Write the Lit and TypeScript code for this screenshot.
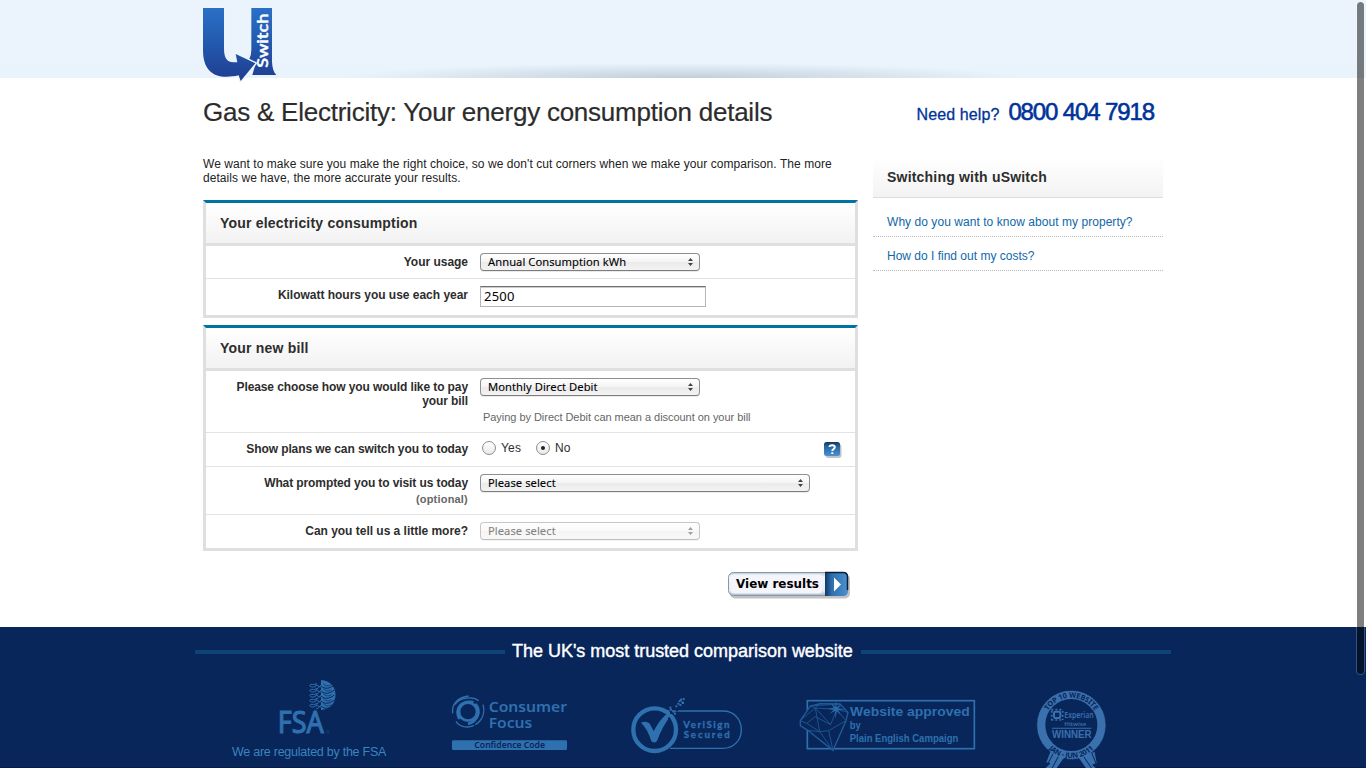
import { LitElement, html, css, svg } from "lit";
import { customElement, property } from "lit/decorators.js";

/** Aqua-style pop-up button. */
@customElement("popup-select")
class PopupSelect extends LitElement {
  @property() label = "";
  static styles = css`
    :host { display: block; width: 220px; }
    :host([wide]) { width: 330px; }
    :host([off]) .box { opacity: .5; }
    .box {
      box-sizing: border-box; height: 18px; padding: 0 5px 0 7px;
      border: 1px solid #8f8f8f; border-bottom-color: #7d7d7d; border-radius: 4px;
      background: linear-gradient(#fff, #f5f5f5 48%, #ebebeb 52%, #f3f3f3);
      display: flex; align-items: center; justify-content: space-between;
      font: 11.2px/16px "Noto Sans", sans-serif; color: #000; white-space: nowrap;
      letter-spacing: .05px; -webkit-text-stroke: .1px;
      box-shadow: 0 1px 0 rgba(0,0,0,.08);
    }
    svg { display: block; }
  `;
  render() {
    return html`<div class="box"><span>${this.label}</span>
      <svg width="7" height="10" viewBox="0 0 7 10"><path fill="#444" d="M3.5 1 6 4H1ZM1 6H6L3.5 9Z"/></svg></div>`;
  }
}

const logo = svg`
  <defs><linearGradient id="g" x1="0" y1="24" x2="0" y2="235" gradientUnits="userSpaceOnUse">
    <stop offset="0" stop-color="#2a70c6"/><stop offset=".55" stop-color="#2257ac"/><stop offset="1" stop-color="#1f3f92"/>
  </linearGradient></defs>
  <path fill="url(#g)" d="M184 24H246V185Q247 212 259 225H187Q192 206 197 192L178 176Q184 165 184 150Z"/>
  <path fill="url(#g)" stroke="#edf4fc" stroke-width="9" stroke-linejoin="round" paint-order="stroke" d="M39 24H102V145C102 176 112 187 130 187H142L137 162L196 190L152 243L146 226C82 240 39 222 39 150Z"/>
  <text class="t" fill="#fff" stroke="#fff" stroke-width="1.2" font-weight="600" font-size="47" transform="translate(233 203) rotate(-90)" textLength="162" lengthAdjust="spacingAndGlyphs">Switch</text>`;

const waves = [0, 1, 2, 3, 4].map((i) => {
  const y = 198 + i * 15;
  return svg`<path fill="none" stroke="#2f70ae" stroke-width="3" d="M396 ${y + 3}C384 ${y + 3} 374 ${y - 8} 363 ${y - 5}C354 ${y - 1} 364 ${y + 6} 374 ${y + 2}C382 ${y - 1} 382 ${y - 8} 376 ${y - 9}M396 ${y - 5}C390 ${y - 3} 388 ${y + 8} 378 ${y + 9}"/>
    <path fill="none" stroke="#08265a" stroke-width="3" d="M393 ${y}C404 ${y + 10} 418 ${y + 9} 433 ${y - 3}"/>
    <path fill="none" stroke="#08265a" stroke-width="2" d="M400 ${y - 7}C406 ${y} 416 ${y + 2} 424 ${y - 4}"/>`;
});

const fsa = svg`
  <path fill="#2f70ae" d="M393 180c58 2 58 88 0 90Z"/>${waves}
  <text class="hum" fill="#2f70ae" font-weight="400" stroke="#2f70ae" stroke-width="3.5" font-size="94" x="263" y="340" textLength="138" lengthAdjust="spacingAndGlyphs">FSA</text>
  <circle cx="413" cy="335" r="4" fill="none" stroke="#2a66a2"/>
  <text class="ari" fill="#3a84bf" font-size="37.5" x="126" y="407" textLength="463">We are regulated by the FSA</text>`;

const consumer = svg`
  <g fill="none" stroke="#2f70ae">
    <circle cx="834" cy="275" r="27" stroke-width="8"/>
    <path stroke-width="9" d="M809 297C793 266 814 240 850 247"/>
    <path stroke-width="8" d="M856 252C876 274 862 304 834 312"/>
    <path stroke-width="4" d="M788 280C785 252 802 232 836 228M794 254C810 232 850 228 866 242M798 304C808 320 832 326 852 316M856 314C876 302 886 280 879 254"/>
  </g>
  <g class="hum" fill="#2f70ae" font-weight="600" font-size="43">
    <text x="896" y="276" textLength="235" lengthAdjust="spacingAndGlyphs">Consumer</text>
    <text x="896" y="323" textLength="131" lengthAdjust="spacingAndGlyphs">Focus</text></g>
  <rect x="786" y="361" width="345" height="29" rx="4" fill="#2f70ae"/>
  <text class="hum" fill="#08265a" font-weight="600" font-size="24" x="853" y="385" textLength="212" lengthAdjust="spacingAndGlyphs">Confidence Code</text>`;

const dots = [[240,266],[250,262],[248,272],[256,256],[262,248],[258,268],[268,252],[266,240],[274,244],[240,276],[232,270],[252,278],[244,286],[234,292],[246,298],[270,236],[278,234],[264,258],[276,246],[238,260],[224,290]];
const verisign = svg`
  <path fill="none" stroke="#2f70ae" stroke-width="4" d="M246 273H398C434 273 454 300 454 329S434 385 398 385H240"/>
  <circle cx="194" cy="329" r="64" fill="#08265a" stroke="#2f70ae" stroke-width="13"/>
  <path fill="#2f70ae" d="M153 308c13-5 22-2 28 6l10 20c12-25 26-42 47-59l6 10c-18 22-32 48-43 78c-6 6-12 6-17 0c-7-23-17-41-31-55Z"/>
  ${dots.map(([x, y], i) => svg`<rect x=${x} y=${y} width="6" height="6" fill=${i % 4 === 1 ? "#08265a" : "#2f70ae"} />`)}
  <g class="geo" fill="#2f70ae" stroke="#2f70ae" stroke-width="1" font-weight="700" font-size="29">
    <text x="280" y="323" textLength="138">VeriSign</text><text x="281" y="354" textLength="138">Secured</text></g>`;

const plain = svg`
  <rect x="652" y="242" width="501" height="144" fill="none" stroke="#2f70ae" stroke-width="5"/>
  <path fill="#08265a" stroke="#225b98" stroke-width="4" d="M631 302L661 258L690 251L750 252L774 277L768 302L729 391L653 331L631 317Z"/>
  <path fill="none" stroke="#225b98" stroke-width="2.5" d="M631 302L650 310L689 335L716 332L768 302M653 331L689 335L729 391L716 332M661 258L676 264L740 268L774 277M690 251L676 264L632 300M676 264L689 335M676 264L722 314L740 268L768 302M650 310L676 290L722 314M750 252L740 268M661 258L750 252"/>
  <path fill="#2a68a6" d="M738 236l2 25 16-7-12 11 24 3-24 3 8 14-12-11-3 24-2-25-16 8 12-12-20-3 20-3-9-14 14 11Z"/>
  <g class="ari" fill="#2f70ae">
    <text font-weight="700" font-size="38" x="780" y="289" textLength="359" lengthAdjust="spacingAndGlyphs">Website approved</text>
    <text font-weight="700" font-size="32" x="779" y="328" textLength="33" lengthAdjust="spacingAndGlyphs">by</text>
    <text font-weight="700" font-size="34" x="779" y="365" textLength="326" lengthAdjust="spacingAndGlyphs">Plain English Campaign</text></g>`;

const experian = svg`
  <path fill="#3a70ad" d="M211 396L254 410L226 450H190L212 430L199 427ZM344 396L294 410L322 450H354L336 434L350 429Z"/>
  <path fill="none" stroke="#08265a" stroke-width="3" d="M221 398L199 440M335 398L352 440M236 408L213 450M310 408L338 450"/>
  <circle cx="274" cy="315" r="90" fill="#08265a" stroke="#3a70ad" stroke-width="24"/>
  <circle cx="274" cy="315" r="102" fill="none" stroke="#4b82bd" stroke-width="2" stroke-dasharray="4 3"/>
  <path id="top" fill="none" d="M192 315A82 82 0 0 1 356 315"/>
  <path id="bot" fill="none" d="M175 315A99 99 0 0 0 373 315"/>
  <g class="hum" font-weight="700" font-size="22" fill="#08265a" text-anchor="middle">
    <text><textPath href="#top" startOffset="50%" textLength="168">TOP 10 WEBSITE</textPath></text>
    <text><textPath href="#bot" startOffset="50%" textLength="150">JAN - JUN 2011</textPath></text></g>
  <rect x="222" y="275" width="19" height="19" rx="4" fill="none" stroke="#3a70ad" stroke-width="6"/>
  <path stroke="#3a70ad" stroke-width="5" stroke-dasharray="6 6" d="M214 269H250M214 300H250M215 272V300M248 272V300"/>
  <g class="hum" fill="#3a70ad">
    <text font-size="24" font-weight="600" x="253" y="294" textLength="88" lengthAdjust="spacingAndGlyphs">Experian</text>
    <text font-size="18" font-weight="600" x="253" y="317" textLength="66" lengthAdjust="spacingAndGlyphs">Hitwise</text>
    <path d="M216 323H334V326H216Z"/>
    <text class="ari" font-size="34" font-weight="700" x="216" y="354" textLength="119" lengthAdjust="spacingAndGlyphs">WINNER</text></g>`;

@customElement("app-root")
class AppRoot extends LitElement {
  static styles = css`
    :host { display: block; height: 768px; overflow: hidden; position: relative; background: #fff;
      font: 12px/14px "Liberation Sans", Arial, sans-serif; color: #2d2d2d; }
    * { box-sizing: border-box; }
    h1, h2, p { margin: 0; }
    svg { display: block; }
    .top { height: 78px; padding-left: 190px;
      background: radial-gradient(ellipse 340px 15px at 683px 78px, rgba(150,165,180,.48), rgba(170,188,202,.32) 50%, rgba(225,243,247,0)) no-repeat, linear-gradient(#ebf4fd 0 55px, #e9f3fa); }
    .logo { overflow: visible; }
    .logo .t { font-family: Lato, sans-serif; }
    .main { height: 549px; padding-left: 203px; display: flex; gap: 15px; }
    .left { width: 655px; padding-top: 18px; }
    h1 { font-size: 26px; line-height: 32px; font-weight: 400; letter-spacing: -.235px; white-space: nowrap; color: #2c2c2c; -webkit-text-stroke: .2px; }
    .intro { margin-top: 29px; margin-bottom: 15px; white-space: nowrap; color: #222; letter-spacing: .06px; }
    .panel { border: 3px solid #dfdfdf; border-top-color: #0073a4; margin-bottom: 7px; }
    .head { height: 43px; border-bottom: 3px solid #dfdfdf; padding: 12px 14px; line-height: 16px;
      font-size: 14px; font-weight: 700; letter-spacing: .2px; background: linear-gradient(#fff, #f2f2f2); }
    .row { display: flex; gap: 12px; border-bottom: 1px solid #e3e3e3; height: 33px; }
    .row.last { border: 0; }
    .label { width: 262px; text-align: right; font-weight: 700; padding-top: 9px; letter-spacing: -.1px; }
    .even { letter-spacing: -.02px; }
    .opt { display: block; font-size: 11px; color: #666; margin-top: 2px; letter-spacing: .2px; }
    .field { flex: 1; padding-top: 7px; }
    .h36 { height: 36px; } .h62 { height: 62px; } .h34 { height: 34px; } .h48 { height: 48px; }
    .input { width: 226px; height: 21px; border: 1px solid #b5b5b5; border-top: 1px solid #6e6e6e; box-shadow: inset 0 1px 0 #ccc;
      font: 13px/19px "Noto Sans", sans-serif; color: #000; padding-left: 3px; letter-spacing: .2px; }
    .hint { font-size: 11px; color: #666; margin: 14px 0 0 3px; letter-spacing: -.04px; }
    .radios { display: flex; align-items: center; padding: 0 14px 4px 2px; }
    .radio { width: 14px; height: 14px; border: 1px solid #8c8c8c; border-radius: 50%; background: linear-gradient(#fff, #e9e9e9); margin-right: 5px; display: grid; place-items: center; }
    .dot { width: 4px; height: 4px; border-radius: 50%; background: #222; }
    .rl { width: 35px; }
    .radios span { letter-spacing: .2px; }
    .help { margin: 5px -1px 0 auto; }
    .act { display: flex; justify-content: flex-end; padding: 13px 5px 0 0; }
    .side { width: 290px; padding-top: 19px; color: #039; }
    .call { display: flex; align-items: baseline; justify-content: flex-end; gap: 9px; height: 60px; padding-right: 9px; font-size: 16px; line-height: 30px; white-space: nowrap; color: #039; }
    .phone { font-size: 24px; letter-spacing: -1.12px; -webkit-text-stroke: .6px #039; }
    .call > span:first-child { -webkit-text-stroke: .3px #039; letter-spacing: .1px; }
    .sh { height: 41px; border-bottom: 1px solid #ddd; padding: 12px 14px; font-size: 14px; line-height: 16px; font-weight: 700; color: #2d2d2d; letter-spacing: .2px; background: linear-gradient(#fff, #f3f3f3); }
    .link { height: 34px; padding: 12px 14px 0; color: #0f68ab; border-bottom: 1px dotted #bbb; }
    .link.first { height: 39px; padding-top: 17px; letter-spacing: .05px; }
    .foot { height: 141px; background: #08265a; padding-left: 195px; box-shadow: inset 0 -1px #061d4b; }
    .title { width: 976px; height: 49px; display: flex; align-items: center; gap: 7px; color: #fff; font-size: 18px; white-space: nowrap; letter-spacing: -.02px; }
    .title h2 { font-size: 18px; font-weight: 400; -webkit-text-stroke: .4px #fff; line-height: 22px; padding-bottom: 1px; width: 342px; }
    .line { flex: 1; height: 4px; background: #0d4377; margin-top: 1px; }
    .badges { display: flex; gap: 40px; padding-left: 25px; }
    .badges svg { flex: none; }
    .hum { font-family: "Noto Sans", sans-serif; } .ari { font-family: "Liberation Sans", Arial, sans-serif; } .geo { font-family: Lato, sans-serif; }
    .scroll { position: absolute; right: 1px; top: 1px; width: 9px; height: 674px; border: 1px solid rgba(255,255,255,.2); border-radius: 5px; background: rgba(0,0,0,.5); background-clip: padding-box; }
  `;

  render() {
    return html`
      <div class="top"><svg class="logo" width="110" height="90" viewBox="0 0 330 270">${logo}</svg></div>
      <div class="main">
        <div class="left">
          <h1>Gas &amp; Electricity: Your energy consumption details</h1>
          <p class="intro">We want to make sure you make the right choice, so we don't cut corners when we make your comparison. The more<br>details we have, the more accurate your results.</p>
          <div class="panel">
            <div class="head">Your electricity consumption</div>
            <div class="row"><div class="label even">Your usage</div><div class="field"><popup-select label="Annual Consumption kWh"></popup-select></div></div>
            <div class="row h36 last"><div class="label even">Kilowatt hours you use each year</div><div class="field"><div class="input">2500</div></div></div>
          </div>
          <div class="panel">
            <div class="head">Your new bill</div>
            <div class="row h62"><div class="label">Please choose how you would like to pay<br>your bill</div>
              <div class="field"><popup-select label="Monthly Direct Debit"></popup-select><div class="hint">Paying by Direct Debit can mean a discount on your bill</div></div></div>
            <div class="row h34"><div class="label">Show plans we can switch you to today</div>
              <div class="field radios"><span class="radio"></span><span class="rl">Yes</span><span class="radio"><span class="dot"></span></span><span>No</span>
                <svg class="help" width="18" height="17" viewBox="0 0 18 17">
                  <defs><linearGradient id="h" x2="0" y2="1"><stop stop-color="#12365d"/><stop offset=".35" stop-color="#2867a5"/><stop offset="1" stop-color="#4a92d2"/></linearGradient></defs>
                  <rect x="1.5" y="2" width="16" height="14" rx="3" fill="#999" opacity=".6"/><rect width="16" height="14" rx="2.5" fill="url(#h)"/>
                  <path d="M5.5 5C5.5 2.8 10.8 2.6 10.8 5.3C10.8 7 8.3 7 8.3 9M8.3 10.2V12" fill="none" stroke="#fff" stroke-width="2"/></svg></div></div>
            <div class="row h48"><div class="label">What prompted you to visit us today<span class="opt">(optional)</span></div><div class="field"><popup-select wide label="Please select"></popup-select></div></div>
            <div class="row last"><div class="label even">Can you tell us a little more?</div><div class="field"><popup-select off label="Please select"></popup-select></div></div>
          </div>
          <div class="act"><svg width="126" height="30" viewBox="0 0 126 30">
            <defs><linearGradient id="b" x2="1" y2="0"><stop stop-color="#0d3868"/><stop offset=".3" stop-color="#2f70ae"/><stop offset="1" stop-color="#4c90cf"/></linearGradient>
              <linearGradient id="w" x2="0" y2="1"><stop stop-color="#c3cbd5"/><stop offset=".2" stop-color="#f6f7fb"/><stop offset=".8" stop-color="#e8ecf4"/><stop offset="1" stop-color="#aab7c4"/></linearGradient></defs>
            <rect x="3" y="3" width="120" height="24.500" rx="5" fill="#999" opacity=".6"/>
            <rect x="1.5" y="1.5" width="119" height="23" rx="5" fill="url(#w)" stroke="#8298ab"/>
            <rect x="4" y="3.5" width="91" height="19" rx="3" fill="#f4f5fb"/>
            <path d="M98 1H116Q121 1 121 6V20Q121 25 116 25H98Z" fill="url(#b)"/>
            <path d="M98 1.5H116Q120.5 1.5 120.5 6V19" fill="none" stroke="#081f3b" stroke-width="1.5"/>
            <path d="M107 6.500L114 13.500L107 20.500Z" fill="#fff"/>
            <text x="9" y="17" font-family="DejaVu Sans" font-weight="700" font-size="12.500" fill="#000" textLength="83" lengthAdjust="spacingAndGlyphs">View results</text></svg></div>
        </div>
        <div class="side">
          <div class="call"><span>Need help?</span><span class="phone">0800 404 7918</span></div>
          <div class="sh">Switching with uSwitch</div>
          <div class="link first">Why do you want to know about my property?</div>
          <div class="link">How do I find out my costs?</div>
        </div>
      </div>
      <div class="foot">
        <div class="title"><span class="line"></span><h2>The UK's most trusted comparison website</h2><span class="line"></span></div>
        <div class="badges">
          <svg width="180" height="92" viewBox="90 168 540 276">${fsa}</svg>
          <svg width="140" height="92" viewBox="750 168 420 276">${consumer}</svg>
          <svg width="130" height="92" viewBox="90 168 390 276">${verisign}</svg>
          <svg width="200" height="92" viewBox="600 168 600 276">${plain}</svg>
          <svg width="85" height="92" viewBox="150 168 255 276">${experian}</svg>
        </div>
      </div>
      <div class="scroll"></div>`;
  }
}
